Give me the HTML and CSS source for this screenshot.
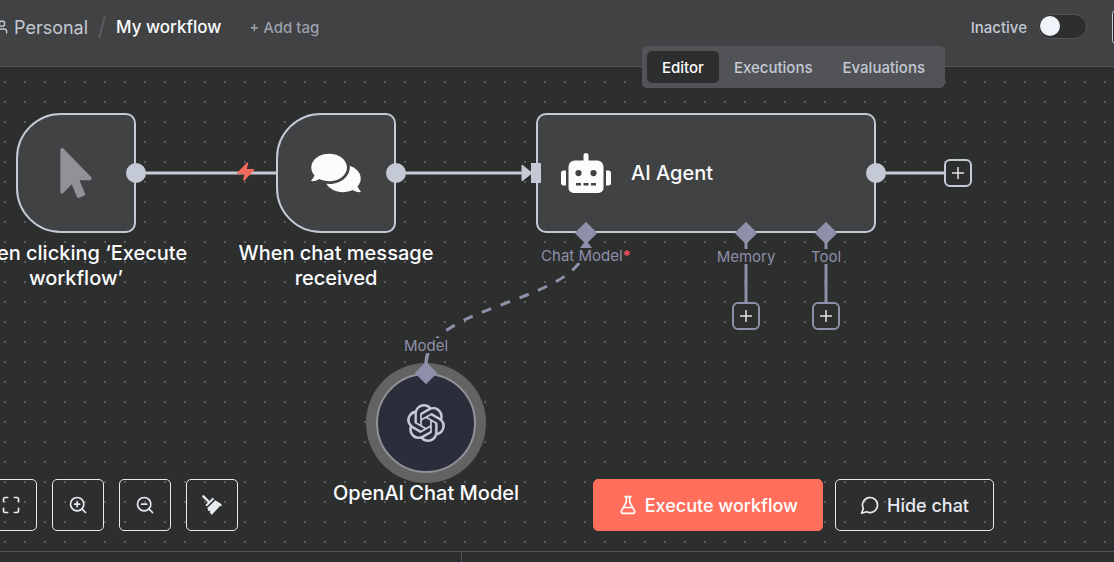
FILE: index.html
```html
<!DOCTYPE html>
<html lang="en">
<head>
<meta charset="utf-8">
<title>My workflow</title>
<link rel="stylesheet" href="styles.css">
</head>
<body>
<header class="header">
  <nav class="crumbs" aria-label="Breadcrumb">
    <a class="crumb" href="#">
      <svg class="icon icon-user" viewBox="0 0 24 24"><path d="M19 21v-2a4 4 0 0 0-4-4H9a4 4 0 0 0-4 4v2"/><circle cx="12" cy="7" r="4"/></svg>
      <span>Personal</span>
    </a>
    <svg class="slash" viewBox="0 0 8 24"><path d="M7 1 1 23"/></svg>
    <h1 class="title">My workflow</h1>
    <button class="add-tag" type="button">+ Add tag</button>
  </nav>
  <div class="header-actions">
    <label class="status" for="active">Inactive</label>
    <input class="toggle" id="active" type="checkbox" role="switch">
    <button class="share" type="button" aria-label="Share"></button>
  </div>
  <div class="tabs">
    <button class="tab tab-active" type="button">Editor</button>
    <button class="tab" type="button">Executions</button>
    <button class="tab" type="button">Evaluations</button>
  </div>
</header>

<main class="canvas">
  <svg class="edges">
    <g class="edge-main">
      <path d="M136 106H276"/>
      <path d="M396 106H524"/>
      <path d="M876 106H945"/>
    </g>
    <path class="arrow-main" d="M522 98v16l10-8z"/>
    <path class="bolt" transform="translate(234 94)" d="M4 13a1 1 0 0 1-.7-1.500l9.600-9.800a.8.8 0 0 1 1.400.7l-1.500 5.600h6.500a1 1 0 0 1 .7 1.600l-9.600 9.800a.8.8 0 0 1-1.400-.7l1.500-5.700z"/>
    <g class="edge-sub">
      <path class="dashed" d="M426 296C426 236 586 236 586 176"/>
      <path d="M426 300Q426 294 428 286"/>
      <path d="M746 176v60M826 176v60"/>
    </g>
    <path class="arrow-sub" d="M580 181h12l-6-8z"/>
  </svg>

  <section class="node trigger node-manual">
    <svg class="glyph glyph-cursor" viewBox="0 0 320 512"><path d="M302.189 329.126H196.105l55.831 135.993c3.889 9.428-.555 19.999-9.444 23.999l-49.165 21.427c-9.165 4-19.443-.571-23.332-9.714l-53.053-129.136-86.664 89.138C18.729 472.71 0 463.554 0 447.977V18.299C0 1.899 19.921-6.096 30.277 5.443l284.412 292.542c11.472 11.179 3.007 31.141-12.5 31.141z"/></svg>
    <span class="port port-out"></span>
    <h2 class="name name-below">When clicking ‘Execute workflow’</h2>
  </section>

  <section class="node trigger node-chat">
    <svg class="glyph glyph-chat" viewBox="0 0 576 512"><path d="M416 192c0-88.400-93.100-160-208-160S0 103.600 0 192c0 34.300 14.100 65.900 38 92-13.400 30.200-35.500 54.200-35.800 54.500-2.200 2.300-2.800 5.700-1.500 8.700S4.800 352 8 352c36.600 0 66.900-12.300 88.700-25 32.200 15.700 70.300 25 111.300 25 114.900 0 208-71.600 208-160zm122 220c23.900-26 38-57.700 38-92 0-66.900-53.500-124.200-129.300-148.100.9 6.600 1.300 13.300 1.300 20.100 0 105.900-107.700 192-240 192-10.800 0-21.300-.8-31.700-1.900C207.800 439.600 281.800 480 368 480c41 0 79.100-9.200 111.300-25 21.800 12.700 52.100 25 88.700 25 3.200 0 6.100-1.900 7.300-4.800 1.300-2.900.7-6.300-1.500-8.700-.3-.2-22.400-24.200-35.800-54.500z"/></svg>
    <span class="port port-out"></span>
    <h2 class="name name-below">When chat message received</h2>
  </section>

  <section class="node node-agent">
    <svg class="glyph glyph-robot" viewBox="0 0 640 512"><path d="M32 224H64V416H32A32 32 0 0 1 0 384V256A32 32 0 0 1 32 224Zm512-48V448a64 64 0 0 1-64 64H160a64 64 0 0 1-64-64V176a80 80 0 0 1 80-80H288V32a32 32 0 0 1 64 0V96H464A80 80 0 0 1 544 176ZM264 256a40 40 0 1 0-40 40A40 40 0 0 0 264 256Zm-8 128H192v32h64Zm96 0H288v32h64ZM456 256a40 40 0 1 0-40 40A40 40 0 0 0 456 256Zm-8 128H384v32h64ZM640 256V384a32 32 0 0 1-32 32H576V224h32A32 32 0 0 1 640 256Z"/></svg>
    <h2 class="name">AI Agent</h2>
    <span class="port-in"></span>
    <span class="port port-out"></span>
    <span class="diamond diamond-model"></span>
    <span class="diamond diamond-memory"></span>
    <span class="diamond diamond-tool"></span>
  </section>

  <section class="node-model">
    <svg class="glyph glyph-openai" viewBox="0 0 24 24"><path d="M22.2819 9.8211a5.9847 5.9847 0 0 0-.5157-4.9108 6.0462 6.0462 0 0 0-6.5098-2.9A6.0651 6.0651 0 0 0 4.9807 4.1818a5.9847 5.9847 0 0 0-3.9977 2.9 6.0462 6.0462 0 0 0 .7427 7.0966 5.98 5.98 0 0 0 .511 4.9107 6.051 6.051 0 0 0 6.5146 2.9001A5.9847 5.9847 0 0 0 13.2599 24a6.0557 6.0557 0 0 0 5.7718-4.2058 5.9894 5.9894 0 0 0 3.9977-2.9001 6.0557 6.0557 0 0 0-.7475-7.0729zm-9.022 12.6081a4.4755 4.4755 0 0 1-2.8764-1.0408l.1419-.0804 4.7783-2.7582a.7948.7948 0 0 0 .3927-.6813v-6.7369l2.02 1.1686a.071.071 0 0 1 .038.052v5.5826a4.504 4.504 0 0 1-4.4945 4.4944zm-9.6607-4.1254a4.4708 4.4708 0 0 1-.5346-3.0137l.142.0852 4.783 2.7582a.7712.7712 0 0 0 .7806 0l5.8428-3.3685v2.3324a.0804.0804 0 0 1-.0332.0615L9.74 19.9502a4.4992 4.4992 0 0 1-6.1408-1.6464zM2.3408 7.8956a4.485 4.485 0 0 1 2.3655-1.9728V11.6a.7664.7664 0 0 0 .3879.6765l5.8144 3.3543-2.0201 1.1685a.0757.0757 0 0 1-.071 0l-4.8303-2.7865A4.504 4.504 0 0 1 2.3408 7.872zm16.5963 3.8558L13.1038 8.364 15.1192 7.2a.0757.0757 0 0 1 .071 0l4.8303 2.7913a4.4944 4.4944 0 0 1-.6765 8.1042v-5.6772a.79.79 0 0 0-.407-.667zm2.0107-3.0231l-.142-.0852-4.7735-2.7818a.7759.7759 0 0 0-.7854 0L9.409 9.2297V6.8974a.0662.0662 0 0 1 .0284-.0615l4.8303-2.7866a4.4992 4.4992 0 0 1 6.6802 4.66zM8.3065 12.863l-2.02-1.1638a.0804.0804 0 0 1-.038-.0567V6.0742a4.4992 4.4992 0 0 1 7.3757-3.4537l-.142.0805L8.704 5.459a.7948.7948 0 0 0-.3927.6813zm1.0976-2.3654l2.602-1.4998 2.6069 1.4998v2.9994l-2.5974 1.4997-2.6067-1.4997Z"/></svg>
    <span class="diamond diamond-source"></span>
    <h2 class="name name-below">OpenAI Chat Model</h2>
  </section>

  <span class="port-label label-model">Chat Model<b class="required">*</b></span>
  <span class="port-label label-memory">Memory</span>
  <span class="port-label label-tool">Tool</span>
  <span class="port-label label-source">Model</span>

  <button class="plus plus-next" type="button" aria-label="Add node"><svg class="plus-icon" viewBox="0 0 12 12"><path d="M6 0v12M0 6h12"/></svg></button>
  <button class="plus plus-memory" type="button" aria-label="Add memory"><svg class="plus-icon" viewBox="0 0 12 12"><path d="M6 0v12M0 6h12"/></svg></button>
  <button class="plus plus-tool" type="button" aria-label="Add tool"><svg class="plus-icon" viewBox="0 0 12 12"><path d="M6 0v12M0 6h12"/></svg></button>

  <div class="controls">
    <div class="view-controls">
      <button class="square" type="button" aria-label="Fit view"><svg class="icon icon-control" viewBox="0 0 24 24"><path d="M8 3H5a2 2 0 0 0-2 2v3M21 8V5a2 2 0 0 0-2-2h-3M3 16v3a2 2 0 0 0 2 2h3M16 21h3a2 2 0 0 0 2-2v-3"/></svg></button>
      <button class="square" type="button" aria-label="Zoom in"><svg class="icon icon-control" viewBox="0 0 24 24"><circle cx="11" cy="11" r="8"/><path d="m21 21-4.350-4.350M11 8v6M8 11h6"/></svg></button>
      <button class="square" type="button" aria-label="Zoom out"><svg class="icon icon-control" viewBox="0 0 24 24"><circle cx="11" cy="11" r="8"/><path d="m21 21-4.350-4.350M8 11h6"/></svg></button>
      <button class="square" type="button" aria-label="Tidy up"><svg class="icon-broom" viewBox="0 0 60 60"><path class="broom-handle" d="M4 4 21 21"/><path d="M32 8q4 0 4 5L15 34q-5-1-4-5l8-9z"/><path d="M40 16 58 27l1 6-6 1-24 26-6-8 2-5-6 1-3-9z"/></svg></button>
    </div>
    <div class="run-controls">
      <button class="action action-primary" type="button"><svg class="icon icon-control" viewBox="0 0 24 24"><path d="M14 2v6a2 2 0 0 0 .245.96l5.510 10.080A2 2 0 0 1 18 22H6a2 2 0 0 1-1.755-2.960l5.510-10.080A2 2 0 0 0 10 8V2M6.453 15h11.094M8.500 2h7"/></svg>Execute workflow</button>
      <button class="action" type="button"><svg class="icon icon-control" viewBox="0 0 24 24"><path d="M7.900 20A9 9 0 1 0 4 16.100L2 22Z"/></svg>Hide chat</button>
    </div>
  </div>
</main>

<footer class="panels">
  <div class="panel panel-chat"></div>
  <div class="panel panel-logs"></div>
</footer>
</body>
</html>
```
FILE: styles.css
```css
:root {
  --surface: #414244;
  --canvas: #2d2e2e;
  --line: #525356;
  --light: #c3c9d5;
  --violet: #8e8fa9;
  --white: #fbfcfe;
}

* { box-sizing: border-box; }

body {
  margin: 0;
  min-height: 100vh;
  display: flex;
  flex-direction: column;
  overflow: hidden;
  background: var(--canvas);
  color: var(--white);
  font-family: Inter, "Liberation Sans", sans-serif;
}

button {
  font: inherit;
  color: inherit;
  margin: 0;
  padding: 0;
  border: 0;
  background: none;
}

h1, h2 { margin: 0; font-weight: 500; }

.icon {
  fill: none;
  stroke: currentColor;
  stroke-width: 2;
  stroke-linecap: round;
  stroke-linejoin: round;
  flex: none;
}

/* Header */
.header {
  position: relative;
  z-index: 2;
  display: flex;
  justify-content: space-between;
  height: 67px;
  padding-bottom: 12px;
  background: var(--surface);
  border-bottom: 1px solid var(--line);
}

.crumbs {
  display: flex;
  align-items: center;
  margin-left: -6px;
}

.crumb {
  display: flex;
  align-items: center;
  gap: 4px;
  color: var(--light);
  font-size: 18px;
  text-decoration: none;
}

.icon-user { width: 16px; height: 16px; }

.slash {
  width: 8px;
  height: 24px;
  margin: 0 10px;
  fill: none;
  stroke: #5c5d60;
  stroke-width: 2;
}

.title { font-size: 17px; }

.add-tag {
  margin-left: 28px;
  color: #9a9fac;
  font-size: 15px;
  font-weight: 500;
}

.header-actions {
  display: flex;
  align-items: center;
  margin-right: -28px;
}

.status {
  color: var(--light);
  font-size: 15px;
  font-weight: 500;
}

.toggle {
  appearance: none;
  width: 49px;
  height: 25px;
  margin: 0 25px 2px 11px;
  padding: 1px;
  border: 1px solid var(--line);
  border-radius: 13px;
  background: var(--canvas);
}

.toggle::before {
  content: "";
  display: block;
  width: 20px;
  height: 20px;
  border-radius: 50%;
  background: #f1f3fa;
}

.share {
  width: 30px;
  height: 36px;
  border: 1px solid var(--light);
  border-radius: 5px;
  background: var(--canvas);
}

.tabs {
  position: absolute;
  top: 46px;
  right: 169px;
  display: flex;
  padding: 5px;
  border-radius: 5px;
  background: var(--line);
}

.tab {
  height: 32px;
  padding: 0 15px;
  border-radius: 5px;
  color: var(--light);
  font-size: 15px;
  font-weight: 500;
}

.tab-active { background: var(--canvas); color: var(--white); }

/* Canvas */
.canvas {
  position: relative;
  flex: 1;
  background: radial-gradient(circle, #5c5d5d 1px, transparent 1px) -5px 5px / 20px 20px;
}

.edges {
  position: absolute;
  inset: 0;
  width: 100%;
  height: 100%;
  fill: none;
}

.edge-main { stroke: var(--light); stroke-width: 3; }
.edge-sub { stroke: var(--violet); stroke-width: 3; }
.dashed { stroke-dasharray: 10 10; }
.arrow-main { fill: var(--light); stroke: var(--light); stroke-width: 1; }
.arrow-sub { fill: var(--violet); }
.bolt { fill: #f3695b; }

.node {
  position: absolute;
  top: 46px;
  display: flex;
  align-items: center;
  height: 120px;
  border: 2px solid var(--light);
  border-radius: 10px;
  background: var(--surface);
}

.trigger {
  justify-content: center;
  width: 120px;
  border-radius: 45px 10px 10px 45px;
}

.node-manual { left: 16px; }
.node-chat { left: 276px; }

.node-agent {
  left: 536px;
  width: 340px;
  gap: 20px;
  padding-left: 23px;
}

.node-model {
  position: absolute;
  left: 376px;
  top: 306px;
  display: flex;
  align-items: center;
  justify-content: center;
  width: 100px;
  height: 100px;
  border: 2px solid #909298;
  border-radius: 50%;
  background: #2c2d3a;
  box-shadow: 0 0 0 10px #636363;
}

.glyph { fill: var(--white); flex: none; }
.glyph-cursor { width: 32px; height: 50px; fill: #919298; }
.glyph-chat { width: 50px; height: 44px; }
.glyph-robot { width: 50px; height: 40px; }
.glyph-openai { width: 38px; height: 38px; fill: var(--light); }

.name { font-size: 20px; line-height: 25px; }

.name-below {
  position: absolute;
  top: 126px;
  left: 50%;
  width: 240px;
  margin-left: -120px;
  text-align: center;
}

.node-model .name-below { top: 106px; }

.port {
  position: absolute;
  top: 48px;
  right: -12px;
  width: 20px;
  height: 20px;
  border-radius: 50%;
  background: var(--light);
}

.port-in {
  position: absolute;
  top: 48px;
  left: -7px;
  width: 10px;
  height: 20px;
  background: var(--light);
}

.diamond {
  position: absolute;
  bottom: -10px;
  width: 16px;
  height: 16px;
  background: var(--violet);
  transform: rotate(45deg);
}

.diamond-model { left: 40px; }
.diamond-memory { left: 200px; }
.diamond-tool { left: 280px; }
.diamond-source { left: 40px; top: -10px; }

.port-label {
  position: absolute;
  transform: translateX(-50%);
  background: var(--canvas);
  color: var(--violet);
  font-size: 15px;
  line-height: 15px;
  white-space: nowrap;
}

.label-model { left: 586px; top: 181px; }
.label-memory { left: 746px; top: 182px; }
.label-tool { left: 826px; top: 182px; }
.label-source { left: 426px; top: 271px; }
.required { color: #f4525c; font-weight: 700; }

.plus {
  position: absolute;
  display: flex;
  align-items: center;
  justify-content: center;
  width: 28px;
  height: 28px;
  border: 2px solid var(--violet);
  border-radius: 6px;
  background: var(--canvas);
}

.plus-icon { width: 12px; height: 12px; stroke: #e3e4e8; stroke-width: 1.5; }
.plus-next { left: 944px; top: 92px; border-color: var(--light); }
.plus-memory { left: 732px; top: 235px; }
.plus-tool { left: 812px; top: 235px; }

.controls {
  position: absolute;
  left: -15px;
  right: 120px;
  bottom: 20px;
  display: flex;
  justify-content: space-between;
}

.view-controls { display: flex; gap: 15px; }
.run-controls { display: flex; gap: 12px; }

.square, .action {
  display: flex;
  align-items: center;
  justify-content: center;
  height: 52px;
  border: 1px solid #e8eaf2;
  border-radius: 5px;
  color: #e8eaf2;
}

.square { width: 52px; }

.icon-control { width: 20px; height: 20px; }
.icon-broom { width: 20px; height: 20px; fill: #e8eaf2; }
.broom-handle { stroke: #e8eaf2; stroke-width: 7; stroke-linecap: round; }

.action {
  gap: 7px;
  padding: 0 24px;
  font-size: 18px;
  font-weight: 500;
}

.action-primary {
  border-color: #ff6f5c;
  background: #ff6f5c;
  color: #fff;
}

/* Bottom panels */
.panels {
  display: flex;
  height: 11px;
  border-top: 1px solid var(--line);
}

.panel-chat {
  width: 41.5%;
  border-right: 1px solid var(--line);
}

.panel-logs { flex: 1; }
```
